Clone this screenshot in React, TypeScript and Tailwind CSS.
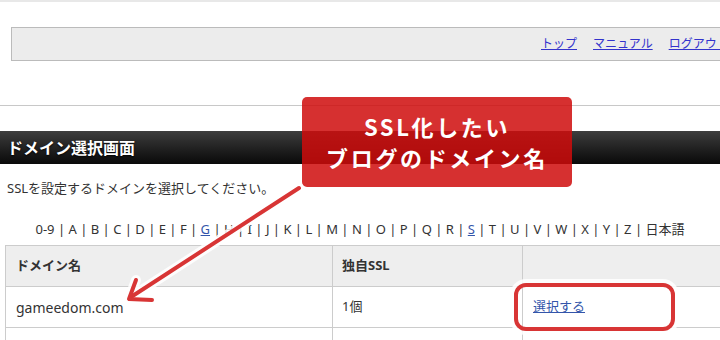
const letters = ['0-9', 'A', 'B', 'C', 'D', 'E', 'F', 'G', 'H', 'I', 'J', 'K', 'L', 'M', 'N', 'O', 'P', 'Q', 'R', 'S', 'T', 'U', 'V', 'W', 'X', 'Y', 'Z', '日本語'];
const linked = ['G', 'S'];

export default function App() {
  return (
    <div className="relative w-[720px] h-[340px] overflow-hidden bg-white text-[#333] font-['Noto_Sans','Noto_Sans_CJK_JP',sans-serif]">
      <div className="h-[2px] bg-[#e8e8e8]" />

      {/* グローバルナビ */}
      <div className="ml-[11px] mt-[25px] w-[760px] h-[34px] border border-r-0 border-[#bbb] bg-[#ececec] flex items-center gap-4 pl-[529px] text-[12px]">
        <a href="#" className="text-[#3333cc] underline">トップ</a>
        <a href="#" className="text-[#3333cc] underline">マニュアル</a>
        <a href="#" className="text-[#3333cc] underline whitespace-nowrap">ログアウト</a>
      </div>

      <div className="mt-[44px] h-px bg-[#c8c8c8]" />

      <div className="mt-[25px] h-[33px] bg-gradient-to-b from-[#3e3e3e] to-[#0a0a0a] flex items-center px-[7px]">
        <h2 className="text-white font-bold text-[16px] [text-shadow:0_1px_2px_rgba(0,0,0,0.9)]">ドメイン選択画面</h2>
      </div>

      <p className="mt-[15px] px-[7px] text-[13px] leading-[18px]">SSLを設定するドメインを選択してください。</p>

      <div className="mt-[23px] text-center text-[13px] leading-[18px] whitespace-nowrap">
        {letters.map((l, i) => (
          <span key={l}>
            {i > 0 && ' | '}
            {linked.includes(l) ? (
              <a href="#" className="text-[#3355aa] underline">{l}</a>
            ) : (
              l
            )}
          </span>
        ))}
      </div>

      <table className="mt-[7px] ml-[5px] w-[730px] border-collapse text-[13px]">
        <thead>
          <tr className="bg-[#eeeeee] h-[41px]">
            <th className="w-[327px] border border-[#ccc] px-[10px] text-left font-bold">ドメイン名</th>
            <th className="w-[190px] border border-[#ccc] px-[9px] text-left font-bold">独自SSL</th>
            <th className="border border-[#ccc]"></th>
          </tr>
        </thead>
        <tbody>
          <tr className="h-[41px]">
            <td className="border border-[#ccc] px-[10px] text-[14px]">gameedom.com</td>
            <td className="border border-[#ccc] px-[9px]">1個</td>
            <td className="border border-[#ccc] px-[10px]">
              <a href="#" className="text-[#3355aa] underline">選択する</a>
            </td>
          </tr>
          <tr className="h-[41px]">
            <td className="border border-[#ccc]"></td>
            <td className="border border-[#ccc]"></td>
            <td className="border border-[#ccc]"></td>
          </tr>
        </tbody>
      </table>

      {/* 注釈 */}
      <div className="absolute left-[302px] top-[97px] w-[270px] h-[90px] rounded-[5px] bg-[rgba(207,12,12,0.85)] flex flex-col items-center justify-center text-white font-bold text-[22px] leading-[31px] tracking-[0.12em] font-['Noto_Sans_CJK_JP',sans-serif]">
        <span>SSL化したい</span>
        <span>ブログのドメイン名</span>
      </div>

      <svg className="absolute left-0 top-0" width="720" height="340" viewBox="0 0 720 340" fill="none">
        <g stroke="rgba(255,255,255,0.85)" strokeWidth="10" strokeLinecap="round" strokeLinejoin="round">
          <path d="M299 188 L131 297" />
          <path d="M136 280 L129 299 L152 300" />
        </g>
        <g stroke="#d83535" strokeWidth="4" strokeLinecap="round" strokeLinejoin="round">
          <path d="M299 188 L131 297" />
          <path d="M136 280 L129 299 L152 300" />
        </g>
      </svg>

      <div className="absolute left-[514px] top-[283px] w-[161px] h-[48px] rounded-[12px] border-4 border-[#d83535] shadow-[0_0_0_4px_rgba(255,255,255,0.85)]" />
    </div>
  );
}
